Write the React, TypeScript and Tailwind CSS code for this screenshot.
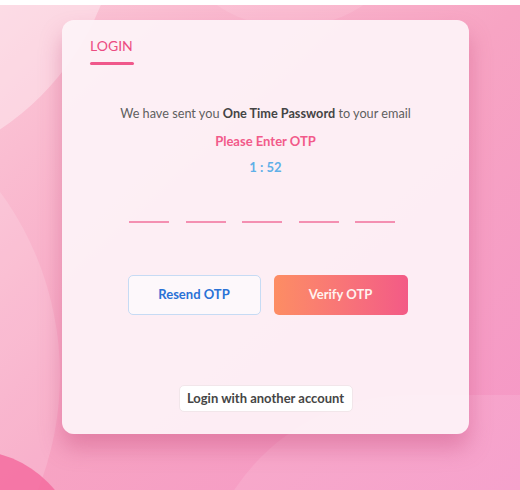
const otpSlots = [0, 1, 2, 3, 4];

export default function App() {
  return (
    <div className="h-[490px] w-[520px] bg-white pt-[5px] font-['Lato','Noto_Sans',sans-serif]">
      <div className="relative h-[485px] overflow-hidden bg-gradient-to-br from-[#fbc9d8] via-[#f7a4c3] to-[#f597c6]">
        {/* background shapes */}
        <div className="absolute left-[-420px] top-[-370px] h-[540px] w-[540px] rounded-full bg-white/35" />
        <div className="absolute left-[-560px] top-[60px] h-[620px] w-[620px] rounded-full bg-white/15" />
        <div className="absolute left-[-150px] top-[445px] h-[220px] w-[230px] rounded-full bg-[#f4689c]/80" />
        <div className="absolute left-[200px] top-[390px] h-[420px] w-[700px] rounded-full bg-white/10" />
        <div className="absolute left-[170px] top-[-200px] h-[220px] w-[240px] rounded-full bg-white/10" />

        <div className="relative pl-[62px] pt-[15px]">
          <div className="flex h-[414px] w-[407px] flex-col rounded-[12px] bg-[#fdf3f7]/[0.93] px-[28px] pt-[16px] shadow-[0_14px_22px_rgba(190,60,110,0.35)]">
            <div className="text-[14px] leading-[20px] text-[#ec4c82]">LOGIN</div>
            <div className="mt-[6px] h-[3px] w-[44px] rounded-full bg-[#f0588b]" />

            <p className="mt-[40px] text-center text-[12.7px] leading-[16px] text-[#5f5f5f]">
              We have sent you <span className="font-bold text-[#444]">One Time Password</span> to your email
            </p>
            <p className="mt-[12px] text-center text-[13px] font-bold leading-[16px] text-[#f25a8a]">
              Please Enter OTP
            </p>
            <p className="mt-[10px] text-center text-[13px] font-bold leading-[16px] text-[#5fb0e8]">1 : 52</p>

            <div className="mt-[46px] flex justify-center gap-[16.5px] pr-[7px]">
              {otpSlots.map((i) => (
                <div key={i} className="h-[2px] w-[40px] bg-[#f48fb1]" />
              ))}
            </div>

            <div className="mt-[52px] flex justify-center gap-[13px] pl-[4px]">
              <button className="h-[40px] w-[133px] rounded-[5px] border border-[#c6dbf4] bg-[#fdf8fb] text-[13px] font-bold text-[#2a72d6]">
                Resend OTP
              </button>
              <button className="h-[40px] w-[134px] rounded-[5px] bg-gradient-to-r from-[#fd8d63] to-[#f35a86] text-[13px] font-bold text-[#fff3ef]">
                Verify OTP
              </button>
            </div>

            <div className="mt-[70px] flex justify-center">
              <button className="h-[27px] w-[174px] rounded-[5px] border border-[#f2e6ea] bg-white text-[13px] font-bold text-[#454545]">
                Login with another account
              </button>
            </div>
          </div>
        </div>
      </div>
    </div>
  );
}
